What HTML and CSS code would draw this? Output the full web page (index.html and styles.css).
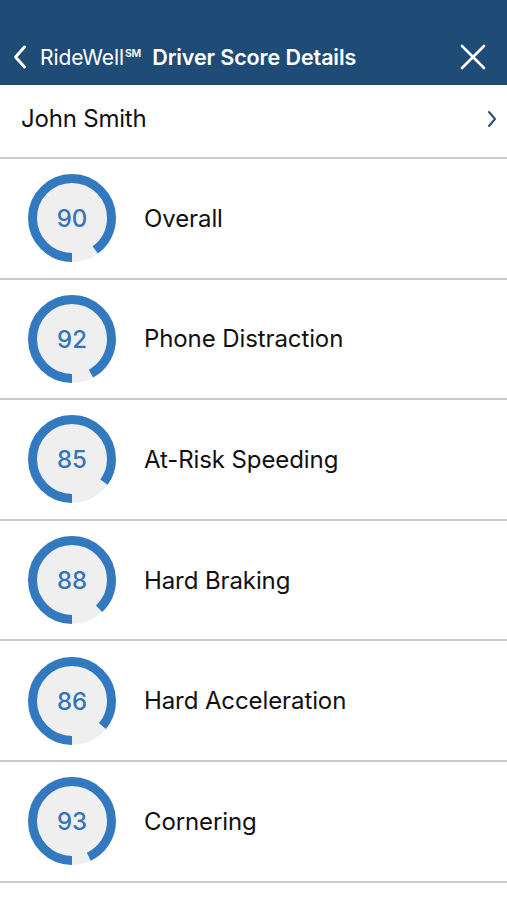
FILE: index.html
```html
<!DOCTYPE html>
<html>
<head>
<meta charset="utf-8">
<link rel="stylesheet" href="styles.css">
</head>
<body>
<header class="nav">
  <div class="nav-left">
    <svg class="back" width="14" height="24" viewBox="0 0 14 24"><path d="M11.5 2 L2.5 12 L11.5 22" fill="none" stroke="#fff" stroke-width="3" stroke-linecap="round" stroke-linejoin="round"/></svg>
    <span class="brand">RideWell<sup>SM</sup></span>
    <span class="title">Driver Score Details</span>
  </div>
  <svg class="close" width="26" height="26" viewBox="0 0 26 26"><path d="M2 2 L24 24 M24 2 L2 24" stroke="#fff" stroke-width="2.6" stroke-linecap="round"/></svg>
</header>
<div class="driver">
  <span class="driver-name">John Smith</span>
  <svg class="chev" width="10" height="18" viewBox="0 0 10 18"><path d="M2 2 L8 9 L2 16" fill="none" stroke="#2d4b6e" stroke-width="2" stroke-linecap="round" stroke-linejoin="round"/></svg>
</div>
<ul class="scores">
  <li class="score-row">
    <svg class="gauge" width="90" height="90" viewBox="0 0 90 90"><circle cx="45" cy="45" r="44" fill="#efefef"/><circle class="arc" cx="45" cy="45" r="39.5" pathLength="100" stroke-dasharray="90 100" transform="rotate(90 45 45)"/><text x="45" y="54" text-anchor="middle">90</text></svg>
    <span class="label">Overall</span>
  </li>
  <li class="score-row">
    <svg class="gauge" width="90" height="90" viewBox="0 0 90 90"><circle cx="45" cy="45" r="44" fill="#efefef"/><circle class="arc" cx="45" cy="45" r="39.5" pathLength="100" stroke-dasharray="92 100" transform="rotate(90 45 45)"/><text x="45" y="54" text-anchor="middle">92</text></svg>
    <span class="label">Phone Distraction</span>
  </li>
  <li class="score-row">
    <svg class="gauge" width="90" height="90" viewBox="0 0 90 90"><circle cx="45" cy="45" r="44" fill="#efefef"/><circle class="arc" cx="45" cy="45" r="39.5" pathLength="100" stroke-dasharray="85 100" transform="rotate(90 45 45)"/><text x="45" y="54" text-anchor="middle">85</text></svg>
    <span class="label">At-Risk Speeding</span>
  </li>
  <li class="score-row">
    <svg class="gauge" width="90" height="90" viewBox="0 0 90 90"><circle cx="45" cy="45" r="44" fill="#efefef"/><circle class="arc" cx="45" cy="45" r="39.5" pathLength="100" stroke-dasharray="88 100" transform="rotate(90 45 45)"/><text x="45" y="54" text-anchor="middle">88</text></svg>
    <span class="label">Hard Braking</span>
  </li>
  <li class="score-row">
    <svg class="gauge" width="90" height="90" viewBox="0 0 90 90"><circle cx="45" cy="45" r="44" fill="#efefef"/><circle class="arc" cx="45" cy="45" r="39.5" pathLength="100" stroke-dasharray="86 100" transform="rotate(90 45 45)"/><text x="45" y="54" text-anchor="middle">86</text></svg>
    <span class="label">Hard Acceleration</span>
  </li>
  <li class="score-row">
    <svg class="gauge" width="90" height="90" viewBox="0 0 90 90"><circle cx="45" cy="45" r="44" fill="#efefef"/><circle class="arc" cx="45" cy="45" r="39.5" pathLength="100" stroke-dasharray="93 100" transform="rotate(90 45 45)"/><text x="45" y="54" text-anchor="middle">93</text></svg>
    <span class="label">Cornering</span>
  </li>
</ul>
</body>
</html>
```
FILE: styles.css
```css
* { box-sizing: border-box; }
html, body { margin: 0; padding: 0; background: #fff; }
body {
  width: 507px;
  height: 900px;
  overflow: hidden;
  font-family: Inter, "Liberation Sans", sans-serif;
  color: #111;
}
.nav {
  height: 85px;
  background: #1f4c76;
  display: flex;
  align-items: flex-end;
  justify-content: space-between;
  padding: 0 21px 15px 13px;
  color: #fff;
}
.nav-left {
  display: flex;
  align-items: center;
  height: 26px;
}
.back { margin-right: 13px; }
.brand {
  font-size: 21px;
  font-weight: 400;
  letter-spacing: -0.1px;
}
.brand sup {
  font-size: 10.5px;
  font-weight: 600;
  vertical-align: 8px;
  margin-left: 1px;
}
.title {
  font-size: 21.5px;
  font-weight: 600;
  margin-left: 11px;
  letter-spacing: -0.1px;
}
.close { display: block; }
.driver {
  height: 74px;
  display: flex;
  align-items: center;
  justify-content: space-between;
  padding: 0 10px 6px 21px;
  border-bottom: 2px solid #cacaca;
}
.driver-name {
  font-size: 24px;
  letter-spacing: -0.2px;
}
.chev { margin-top: 2px; }
.scores {
  list-style: none;
  margin: 0;
  padding: 0;
}
.score-row {
  height: 120.6px;
  display: flex;
  align-items: center;
  padding-left: 27px;
  border-bottom: 2px solid #cacaca;
}
.gauge { display: block; flex: none; }
.gauge .arc {
  fill: none;
  stroke: #3379bf;
  stroke-width: 9;
}
.gauge text {
  font-family: Inter, "Liberation Sans", sans-serif;
  font-size: 24px;
  font-weight: 500;
  fill: #3574b6;
}
.label {
  margin-left: 27px;
  font-size: 24px;
  letter-spacing: -0.1px;
}
```
